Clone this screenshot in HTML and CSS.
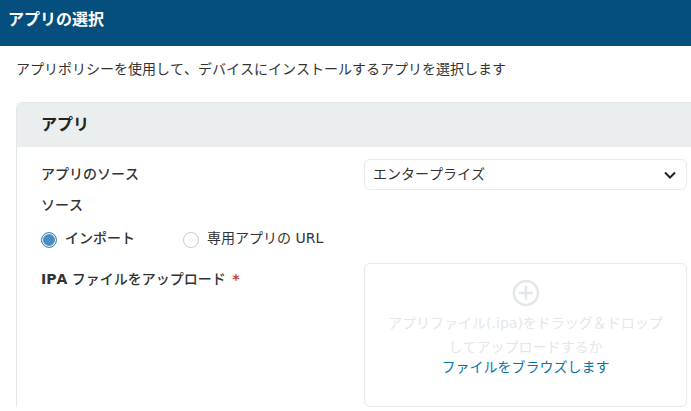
FILE: index.html
```html
<!DOCTYPE html>
<html lang="ja">
	<head>
		<meta charset="UTF-8" />
		<title>アプリの選択</title>
		<link rel="stylesheet" href="styles.css">
	</head>

	<body>
		<header class="top-bar">
			<h1>アプリの選択</h1>
		</header>

		<main>
			<p class="intro">アプリポリシーを使用して、デバイスにインストールするアプリを選択します</p>

			<section class="panel">
				<h2 class="panel-title">アプリ</h2>

				<div class="panel-body">
					<div class="row row-source">
						<span class="label">アプリのソース</span>
						<div class="select">
							<span class="select-value">エンタープライズ</span>
							<svg width="12" height="8" viewBox="0 0 12 8">
								<path d="M1 1.5 L6 6.5 L11 1.5" fill="none" stroke="#222" stroke-width="2" />
							</svg>
						</div>
					</div>

					<div class="label sub-label">ソース</div>

					<div class="radios">
						<span class="radio radio-on"><i class="dot"></i><span class="radio-text">インポート</span></span>
						<span class="radio radio-off"><i class="dot"></i><span class="radio-text">専用アプリの URL</span></span>
					</div>

					<div class="row row-upload">
						<span class="label"><b>IPA</b> ファイルをアップロード <b class="required">*</b></span>
						<div class="dropzone">
							<svg width="28" height="28" viewBox="0 0 28 28">
								<circle cx="14" cy="14" r="12" fill="none" stroke="#e3e7ea" stroke-width="2.5" />
								<path d="M14 7 V21 M7 14 H21" fill="none" stroke="#e3e7ea" stroke-width="2.5" />
							</svg>
							<p class="drop-text">アプリファイル(.ipa)をドラッグ＆ドロップしてアップロードするか</p>
							<a href="#" class="browse">ファイルをブラウズします</a>
						</div>
					</div>
				</div>
			</section>
		</main>
	</body>
</html>
```

FILE: styles.css
```css
html,
body {
	height: 411px;
	overflow: hidden;
}
body {
	font-family: "DejaVu Sans", "Noto Sans CJK JP", sans-serif;
	font-size: 14px;
	font-kerning: none;
	color: #333;
	margin: 0;
	background-color: white;
}
.top-bar {
	background-color: #054f7f;
	color: white;
	height: 46px;
	padding: 0 8px;
}
.top-bar h1 {
	font-size: 16px;
	line-height: 39px;
	margin: 0;
}
main {
	padding: 0 0 0 16px;
}
.intro {
	margin: 0;
	line-height: 20px;
	padding-top: 13px;
}
.panel {
	width: 690px;
	margin-top: 23px;
	border-left: 1px solid #e3e7ea;
	border-top: 1px solid #e3e7ea;
	border-radius: 6px 0 0 0;
}
.panel-title {
	background-color: #eaeeef;
	color: #222;
	font-size: 16px;
	line-height: 24px;
	margin: 0;
	padding: 10px 24px;
	border-top-left-radius: 6px;
}
.panel-body {
	padding: 12px 0 0 24px;
}
.row {
	display: grid;
	grid-template-columns: 323px 323px;
}
.label {
	font-weight: 500;
	line-height: 20px;
}
.row-source .label {
	padding-top: 5px;
}
.select {
	display: flex;
	align-items: center;
	justify-content: space-between;
	box-sizing: border-box;
	height: 31px;
	padding: 0 10px 0 8px;
	border: 1px solid #e8eaec;
	border-radius: 6px;
}
.select-value {
	padding-bottom: 3px;
}
.sub-label {
	margin-top: 5px;
}
.radios {
	display: flex;
	margin-top: 15px;
	line-height: 20px;
}
.radio {
	display: flex;
	align-items: center;
	gap: 8px;
	height: 20px;
}
.radio-text {
	padding-bottom: 4px;
}
.radio-on {
	font-weight: 500;
	width: 142px;
}
.dot {
	display: block;
	box-sizing: border-box;
	width: 16px;
	height: 16px;
	border-radius: 50%;
	border: 1px solid #ccc;
}
.radio-on .dot {
	border-color: #4a90c2;
	background-color: #4a8ec0;
	box-shadow: inset 0 0 0 1px white;
}
.row-upload {
	margin-top: 13px;
}
.row-upload .label {
	padding-top: 6px;
}
.required {
	color: #c9402f;
	margin-left: 2px;
}
.dropzone {
	display: flex;
	flex-direction: column;
	align-items: center;
	box-sizing: border-box;
	height: 144px;
	padding: 15px 20px 0;
	border: 1px solid #e8eaec;
	border-radius: 6px;
	text-align: center;
}
.drop-text {
	color: #e3e7ea;
	margin: 4px 0 0;
	line-height: 24px;
	width: 280px;
}
.browse {
	color: #0a74a8;
	text-decoration: none;
	line-height: 20px;
	margin-top: -2px;
}
```
